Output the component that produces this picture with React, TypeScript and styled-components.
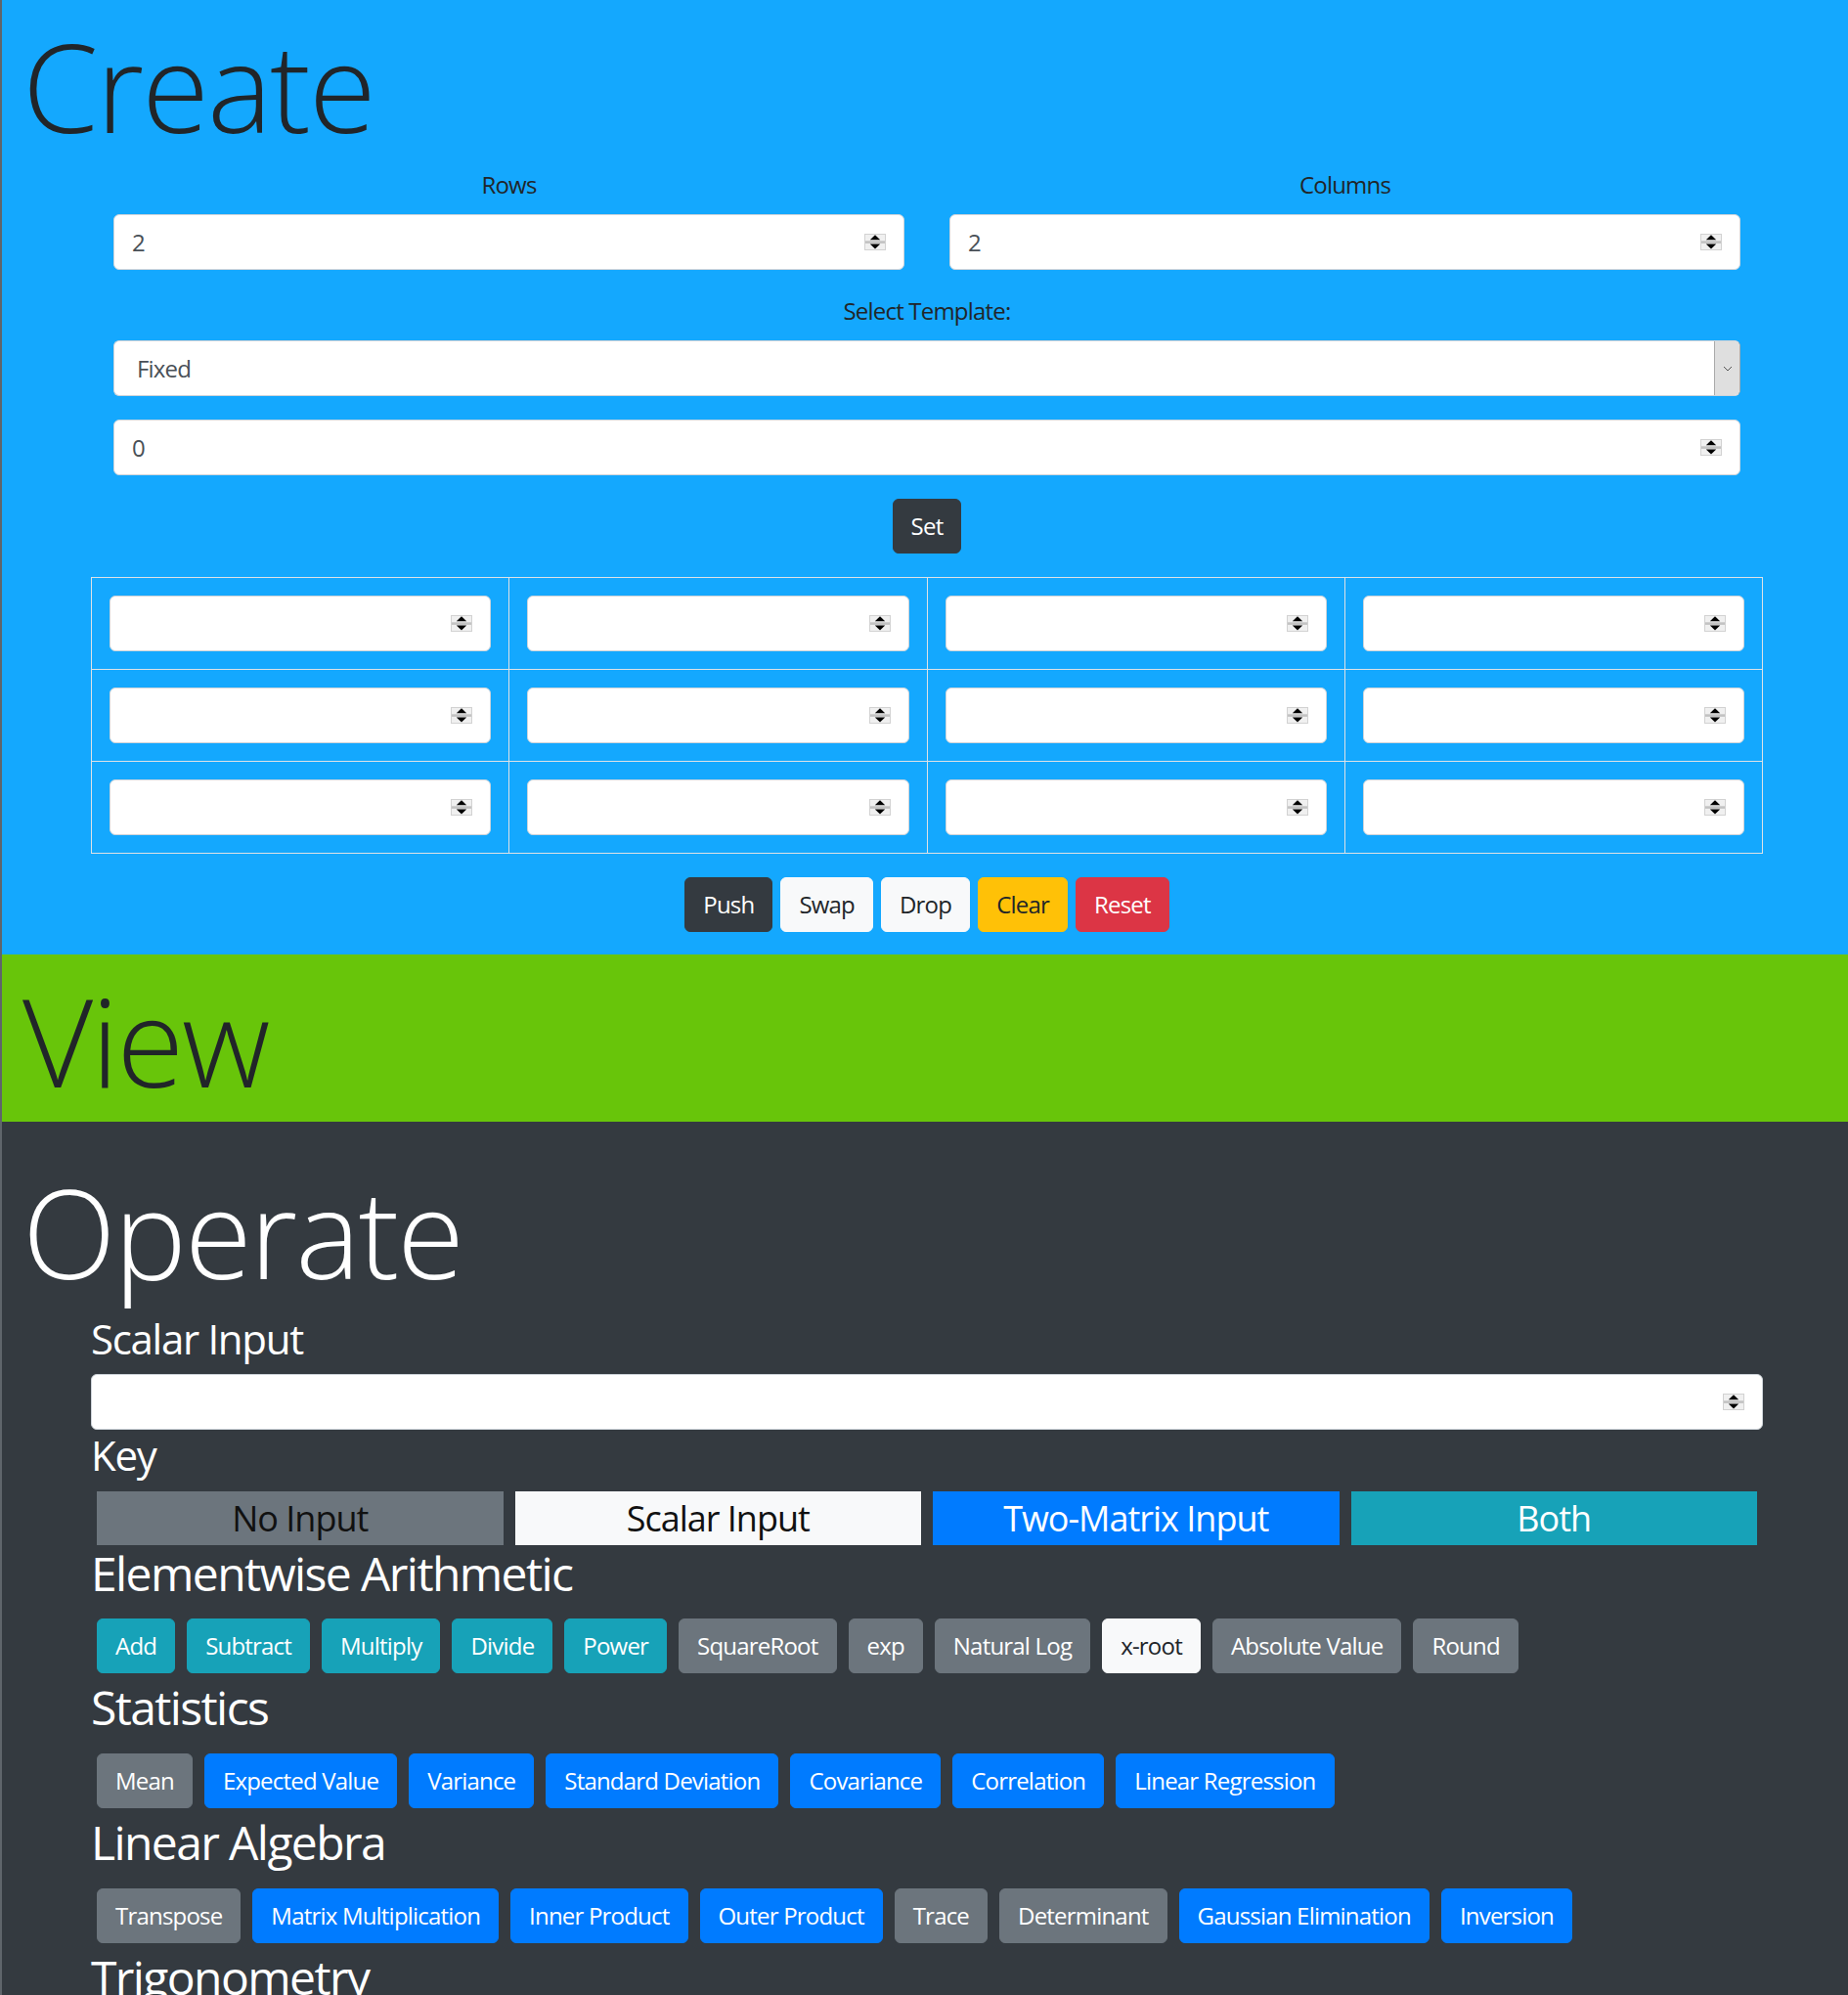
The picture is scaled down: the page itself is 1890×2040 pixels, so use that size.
import styled, { createGlobalStyle } from 'styled-components';

const GlobalStyle = createGlobalStyle`
  html, body {
    margin: 0;
    padding: 0;
  }
  body {
    font-family: "Open Sans", "Noto Sans", sans-serif;
    font-size: 24px;
    color: #212529;
    letter-spacing: -0.8px;
  }
  * {
    box-sizing: border-box;
  }
`;

const colors = {
  blue: '#14a8fe',
  green: '#68c50a',
  dark: '#343a40',
  text: '#212529',
  primary: '#007bff',
  secondary: '#6c757d',
  info: '#17a2b8',
  light: '#f8f9fa',
  warning: '#ffc107',
  danger: '#dc3545',
};

type Variant = 'primary' | 'secondary' | 'info' | 'light' | 'dark' | 'warning' | 'danger';

const variantStyles: Record<Variant, { bg: string; fg: string }> = {
  primary: { bg: colors.primary, fg: '#fff' },
  secondary: { bg: colors.secondary, fg: '#fff' },
  info: { bg: colors.info, fg: '#fff' },
  light: { bg: colors.light, fg: colors.text },
  dark: { bg: colors.dark, fg: '#fff' },
  warning: { bg: colors.warning, fg: colors.text },
  danger: { bg: colors.danger, fg: '#fff' },
};

const Page = styled.div`
  height: 2040px;
  overflow: hidden;
  border-left: 2px solid #5f656b;
`;

const Section = styled.section<{ $bg: string; $top?: number; $bottom?: number }>`
  display: flow-root;
  background: ${p => p.$bg};
  padding-top: ${p => p.$top ?? 0}px;
  padding-bottom: ${p => p.$bottom ?? 0}px;
`;

const Display = styled.h1<{ $light?: boolean }>`
  margin: 0 0 12px;
  padding: 16px 0 0 21px;
  font-size: 125px;
  font-weight: 300;
  line-height: 143px;
  letter-spacing: -2px;
  color: ${p => (p.$light ? '#fff' : colors.text)};
`;

const Container = styled.div<{ $inset?: boolean }>`
  width: 1710px;
  margin-left: calc(50% - 853px);
  padding: 0 ${p => (p.$inset ? 23 : 0)}px;
`;

const FormGroup = styled.div`
  margin-bottom: 24px;
`;

const FieldGrid = styled.div`
  display: grid;
  grid-template-columns: 1fr 1fr;
  column-gap: 46px;
  margin-bottom: 24px;
`;

const Label = styled.div`
  text-align: center;
  line-height: 36px;
  margin-bottom: 12px;
`;

const Field = styled.div`
  display: flex;
  align-items: center;
  height: 57px;
  background: #fff;
  border: 1.5px solid #ced4da;
  border-radius: 6px;
  padding: 0 18px 0 18px;
`;

const FieldValue = styled.span`
  flex: 1;
  color: #495057;
  line-height: 36px;
`;

const SelectBox = styled.div`
  display: flex;
  align-items: stretch;
  height: 57px;
  background: #fff;
  border: 1.5px solid #ced4da;
  border-right-color: #a9a9a9;
  border-radius: 6px;
  overflow: hidden;
`;

const SelectText = styled.span`
  flex: 1;
  padding-left: 23px;
  display: flex;
  align-items: center;
  color: #495057;
`;

const SelectArrow = styled.span`
  width: 26px;
  background: #dfdfdf;
  border-left: 1.5px solid #a9a9a9;
  display: flex;
  align-items: center;
  justify-content: center;
`;

const Centered = styled.div<{ $gap?: number; $last?: boolean }>`
  display: flex;
  justify-content: center;
  gap: ${p => p.$gap ?? 0}px;
  margin-bottom: ${p => (p.$last ? 0 : 24)}px;
`;

const Btn = styled.button<{ $variant: Variant }>`
  font-family: inherit;
  font-size: 24px;
  letter-spacing: -0.8px;
  line-height: 36px;
  padding: 9px 18px;
  border: 1.5px solid ${p => variantStyles[p.$variant].bg};
  border-radius: 6px;
  background: ${p => variantStyles[p.$variant].bg};
  color: ${p => variantStyles[p.$variant].fg};
  cursor: pointer;
`;

const OpBtn = styled(Btn)`
  margin: 6px;
`;

const MatrixTable = styled.table`
  width: 1710px;
  border-collapse: collapse;
  table-layout: fixed;
  margin-bottom: 24px;

  td {
    border: 1px solid #dee2e6;
    padding: 18px;
  }
`;

const SubHeading = styled.h3`
  margin: 0 0 12px;
  padding-top: 1px;
  font-size: 42px;
  font-weight: 400;
  line-height: 49.4px;
  letter-spacing: -1.3px;
  color: #fff;
`;

const GroupHeading = styled.h2`
  margin: 0 0 12px;
  padding-top: 1px;
  font-size: 48px;
  font-weight: 400;
  line-height: 56.6px;
  letter-spacing: -1.6px;
  color: #fff;
`;

const KeyRow = styled.div`
  display: grid;
  grid-template-columns: repeat(4, 1fr);
`;

const KeyBox = styled.div<{ $variant: Variant }>`
  margin: 0 6px;
  height: 55px;
  display: flex;
  align-items: center;
  justify-content: center;
  font-size: 36px;
  letter-spacing: -1px;
  background: ${p => variantStyles[p.$variant].bg};
  color: ${p => (p.$variant === 'primary' || p.$variant === 'info' ? '#fff' : '#111')};
`;

const ButtonWrap = styled.div`
  display: flex;
  flex-wrap: wrap;
`;

const Spinner = () => (
  <svg width="22" height="17" viewBox="0 0 22 17">
    <rect x="0.5" y="0.5" width="21" height="16" fill="#f0f0f0" stroke="#d2d2d2" />
    <rect x="1" y="7.3" width="20" height="2.6" fill="#c2c2c2" />
    <path d="M5.8 6.3 L11 1.2 L16.2 6.3 Z" fill="#000" />
    <path d="M5.8 10.6 L16.2 10.6 L11 15.6 Z" fill="#000" />
  </svg>
);

const NumberField = ({ value }: { value?: string }) => (
  <Field>
    <FieldValue>{value ?? ''}</FieldValue>
    <Spinner />
  </Field>
);

const Chevron = () => (
  <svg width="10" height="6" viewBox="0 0 10 6">
    <path d="M1 1 L5 5 L9 1" fill="none" stroke="#555" strokeWidth="1" />
  </svg>
);

type Op = [string, Variant];

const groups: { title: string; ops: Op[] }[] = [
  {
    title: 'Elementwise Arithmetic',
    ops: [
      ['Add', 'info'],
      ['Subtract', 'info'],
      ['Multiply', 'info'],
      ['Divide', 'info'],
      ['Power', 'info'],
      ['SquareRoot', 'secondary'],
      ['exp', 'secondary'],
      ['Natural Log', 'secondary'],
      ['x-root', 'light'],
      ['Absolute Value', 'secondary'],
      ['Round', 'secondary'],
    ],
  },
  {
    title: 'Statistics',
    ops: [
      ['Mean', 'secondary'],
      ['Expected Value', 'primary'],
      ['Variance', 'primary'],
      ['Standard Deviation', 'primary'],
      ['Covariance', 'primary'],
      ['Correlation', 'primary'],
      ['Linear Regression', 'primary'],
    ],
  },
  {
    title: 'Linear Algebra',
    ops: [
      ['Transpose', 'secondary'],
      ['Matrix Multiplication', 'primary'],
      ['Inner Product', 'primary'],
      ['Outer Product', 'primary'],
      ['Trace', 'secondary'],
      ['Determinant', 'secondary'],
      ['Gaussian Elimination', 'primary'],
      ['Inversion', 'primary'],
    ],
  },
  {
    title: 'Trigonometry',
    ops: [
      ['Sine', 'light'],
      ['Cosine', 'secondary'],
      ['Tangent', 'secondary'],
    ],
  },
];

const keys: [string, Variant][] = [
  ['No Input', 'secondary'],
  ['Scalar Input', 'light'],
  ['Two-Matrix Input', 'primary'],
  ['Both', 'info'],
];

const App = () => {
  const matrix = [0, 1, 2];
  const cols = [0, 1, 2, 3];

  return (
    <Page>
      <GlobalStyle />
      <Section $bg={colors.blue} $bottom={23}>
        <Display>Create</Display>
        <Container $inset>
          <FieldGrid>
            <div>
              <Label>Rows</Label>
              <NumberField value="2" />
            </div>
            <div>
              <Label>Columns</Label>
              <NumberField value="2" />
            </div>
          </FieldGrid>
          <FormGroup>
            <Label>Select Template:</Label>
            <SelectBox>
              <SelectText>Fixed</SelectText>
              <SelectArrow>
                <Chevron />
              </SelectArrow>
            </SelectBox>
          </FormGroup>
          <FormGroup>
            <NumberField value="0" />
          </FormGroup>
          <Centered>
            <Btn $variant="dark">Set</Btn>
          </Centered>
        </Container>
        <Container>
          <MatrixTable>
            <tbody>
              {matrix.map(r => (
                <tr key={r}>
                  {cols.map(c => (
                    <td key={c}>
                      <NumberField />
                    </td>
                  ))}
                </tr>
              ))}
            </tbody>
          </MatrixTable>
          <Centered $gap={8} $last>
            <Btn $variant="dark">Push</Btn>
            <Btn $variant="light">Swap</Btn>
            <Btn $variant="light">Drop</Btn>
            <Btn $variant="warning">Clear</Btn>
            <Btn $variant="danger">Reset</Btn>
          </Centered>
        </Container>
      </Section>

      <Section $bg={colors.green}>
        <Display>View</Display>
      </Section>

      <Section $bg={colors.dark} $top={25}>
        <Display $light>Operate</Display>
        <Container>
          <SubHeading>Scalar Input</SubHeading>
          <NumberField />
          <SubHeading>Key</SubHeading>
          <KeyRow>
            {keys.map(([name, v]) => (
              <KeyBox key={name} $variant={v}>
                {name}
              </KeyBox>
            ))}
          </KeyRow>
          {groups.map(g => (
            <div key={g.title}>
              <GroupHeading>{g.title}</GroupHeading>
              <ButtonWrap>
                {g.ops.map(([name, v]) => (
                  <OpBtn key={name} $variant={v}>
                    {name}
                  </OpBtn>
                ))}
              </ButtonWrap>
            </div>
          ))}
        </Container>
      </Section>
    </Page>
  );
};

export default App;
